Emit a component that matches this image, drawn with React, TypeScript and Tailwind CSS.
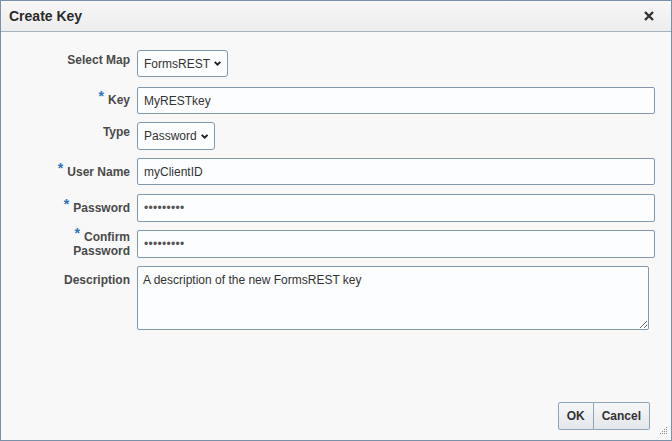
import React from "react";

const font = { fontFamily: '"Liberation Sans", Arial, sans-serif' };

function Chevron() {
  return (
    <svg className="w-[10px] h-[7px] ml-[4px]" viewBox="0 0 10 7" fill="none">
      <path d="M1 1.2l4 4 4-4" stroke="#1f1f1f" strokeWidth={2.6} />
    </svg>
  );
}

function Req() {
  return <span className="text-[#2f73c0] text-[14px] leading-[0] relative -top-[3px] mr-[4px]">*</span>;
}

function Row({
  label,
  required,
  labelPad,
  height,
  children,
}: {
  label: React.ReactNode;
  required?: boolean;
  labelPad: string;
  height: string;
  children: React.ReactNode;
}) {
  return (
    <div className={`flex items-start shrink-0 ${height}`}>
      <div className={`w-[129px] text-right text-[12px] leading-[14px] font-bold text-[#4a4a4a] ${labelPad}`}>
        {required && <Req />}
        {label}
      </div>
      <div className="ml-[7px] flex-1">{children}</div>
    </div>
  );
}

const field =
  "h-[27px] border border-[#8398ab] rounded-[2px] bg-[#fcfdfe] text-[12px] text-[#333] flex items-center px-[6px]";

const dots = "h-[28px] text-[10px] tracking-[0.3px] !text-[#555]";

export default function App() {
  return (
    <div style={font} className="w-[672px] h-[441px] flex flex-col border border-[#7890a8] bg-[#f8f8f8]">
      <div className="h-[31px] shrink-0 flex items-center justify-between pl-[8px] pr-[17px] border-b border-[#a2b1c0] bg-gradient-to-b from-[#f7f7f7] to-[#ededed]">
        <span className="text-[14px] font-bold text-[#2b2b2b]">Create Key</span>
        <svg className="w-[10px] h-[10px]" viewBox="0 0 10 10">
          <path d="M1 1l8 8M9 1L1 9" stroke="#333" strokeWidth={2.4} />
        </svg>
      </div>

      <div className="flex-1 flex flex-col pt-[18px] pr-[16px]">
        <div className="flex flex-col">
          <Row label="Select Map" labelPad="pt-[3px]" height="h-[37px]">
            <div className={`${field} w-[91px] rounded-[3px]`}>
              <span>FormsREST</span>
              <Chevron />
            </div>
          </Row>
          <Row label="Key" required labelPad="pt-[6px]" height="h-[35px]">
            <div className={`${field} h-[26px]`}>MyRESTkey</div>
          </Row>
          <Row label="Type" labelPad="pt-[3px]" height="h-[36px]">
            <div className={`${field} w-[78px] h-[28px] rounded-[3px]`}>
              <span>Password</span>
              <Chevron />
            </div>
          </Row>
          <Row label="User Name" required labelPad="pt-[7px]" height="h-[36px]">
            <div className={field}>myClientID</div>
          </Row>
          <Row label="Password" required labelPad="pt-[7px]" height="h-[36px]">
            <div className={`${field} ${dots}`}>•••••••••</div>
          </Row>
          <Row
            label={
              <>
                Confirm
                <br />
                Password
              </>
            }
            required
            labelPad="pt-[0px] leading-[13px]"
            height="h-[36px]"
          >
            <div className={`${field} ${dots}`}>•••••••••</div>
          </Row>
          <Row label="Description" labelPad="pt-[7px]" height="h-[64px]">
            <textarea
              readOnly
              value="A description of the new FormsREST key"
              style={font}
              className="block w-[512px] h-[64px] border border-[#8398ab] rounded-[2px] bg-[#fcfdfe] text-[12px] text-[#333] px-[5px] py-[4px] outline-none"
            />
          </Row>
        </div>

        <div className="mt-auto flex justify-end items-end pb-[10px] pr-[5px]">
          <button className="h-[28px] px-[8px] border border-[#8fa3b6] rounded-l-[2px] bg-gradient-to-b from-[#f6f7f8] to-[#e3e7eb] text-[12px] font-bold text-[#333]">
            OK
          </button>
          <button className="h-[28px] px-[8px] border border-l-0 border-[#8fa3b6] rounded-r-[2px] bg-gradient-to-b from-[#f6f7f8] to-[#e3e7eb] text-[12px] font-bold text-[#333]">
            Cancel
          </button>
        </div>
      </div>
      <div className="h-0 relative">
        <svg className="absolute right-[3px] bottom-[5px] w-[9px] h-[9px]" viewBox="0 0 9 9">
          {[
            [7, 1],
            [5, 3],
            [7, 3],
            [3, 5],
            [5, 5],
            [7, 5],
            [1, 7],
            [3, 7],
            [5, 7],
            [7, 7],
          ].map(([x, y], i) => (
            <rect key={i} x={x} y={y} width={1} height={1} fill="#8a8a8a" />
          ))}
        </svg>
      </div>
    </div>
  );
}
